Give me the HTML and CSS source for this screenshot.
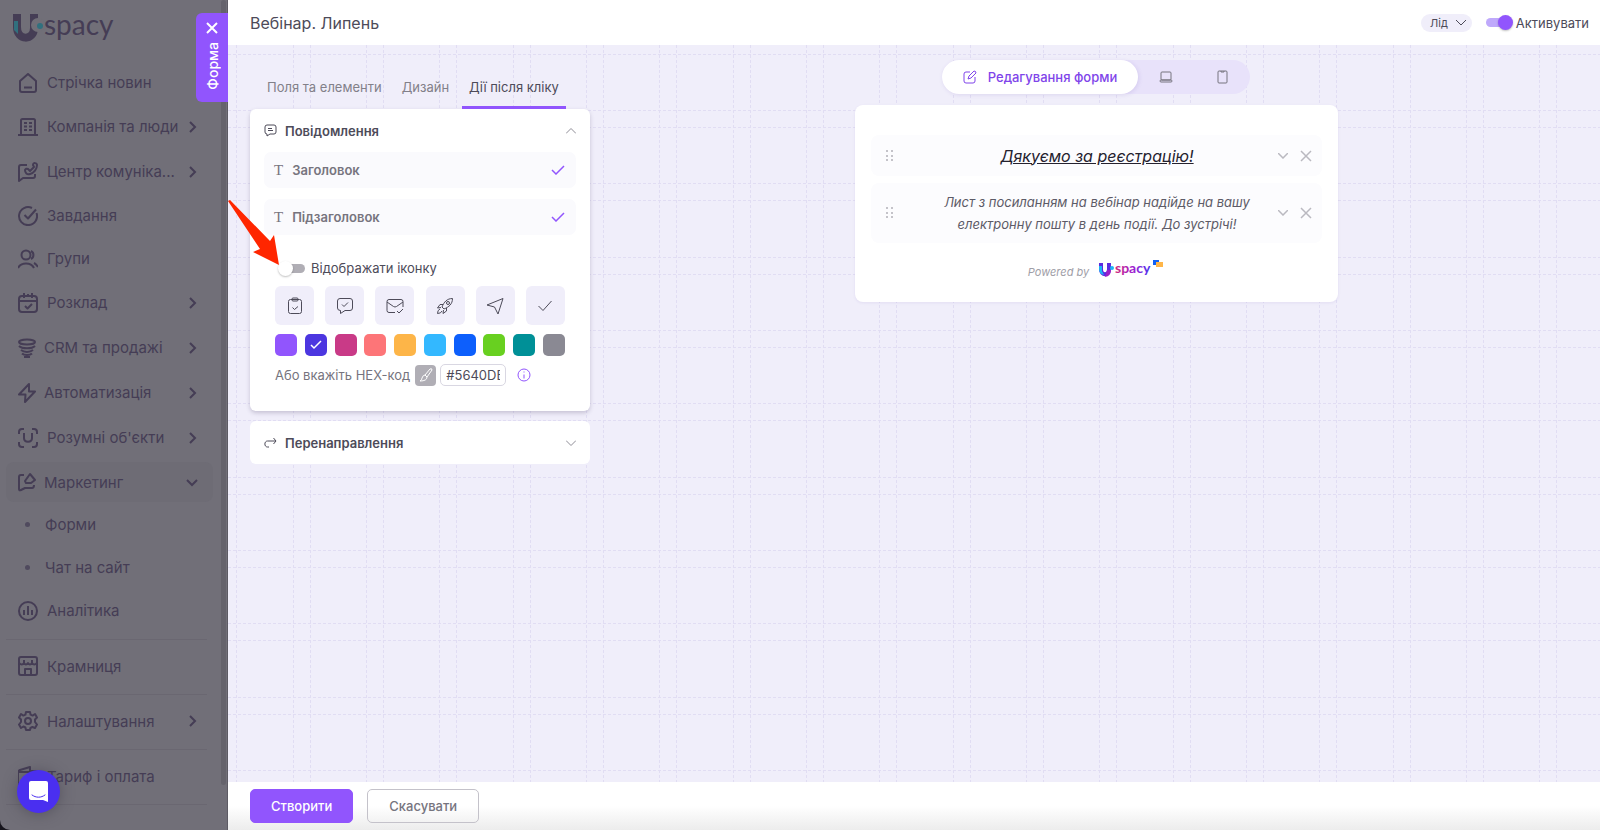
FILE: index.html
```
<!DOCTYPE html>
<html lang="uk">
<head>
  <meta charset="UTF-8" />
  <meta name="viewport" content="width=device-width, initial-scale=1.0"/>
  <title>Uspacy - Форма</title>
  <link rel="stylesheet" href="styles.css">
</head>
<body>

  <!-- SIDEBAR -->
  <aside class="sidebar">
    <svg class="sidebar-logo" width="120" height="44" viewBox="0 -10 120 44" role="img" aria-label="Uspacy">
      <path d="M5 2v13c0 14 17 14 17 1V2" fill="none" stroke="#453d55" stroke-width="8"/>
      <path d="M2 9h4v13l-4-4z" fill="#31707e"/>
      <circle cx="26" cy="13" r="7" fill="#716f78"/>
      <circle cx="28" cy="14" r="3" fill="#31707e"/>
      <text x="32" y="23" class="logo-text">spacy</text>
    </svg>

    <nav class="menu">
      <a href="#" class="menu-item">
        <svg class="icon" viewBox="0 0 20 20"><path d="M2 8l8-7 8 7v9a2 2 0 0 1-2 2H4a2 2 0 0 1-2-2zM6 14.500h8"/></svg>
        <span>Стрічка новин</span>
      </a>
      <a href="#" class="menu-item tall">
        <svg class="icon" viewBox="0 0 20 20"><path d="M3 18V3.500Q3 2 4.500 2h11Q17 2 17 3.500V18M0 18h20M6 6h3M11 6h3M6 9.500h3M11 9.500h3M6 13h3M11 13h3"/></svg>
        <span>Компанія та люди</span>
        <svg class="arrow" viewBox="0 0 12 12"><path d="M4 1l5 5-5 5"/></svg>
      </a>
      <a href="#" class="menu-item tall">
        <svg class="icon" viewBox="0 0 20 20"><path d="M9 3H3Q1 3 1 5v14l4-3h10q2 0 2-2v-2M7 8c0 3 2 5 5 4 4-1 7-5 7-9 0-2-4-3-4 0l1 2-4 4-2-2q-2-1-3 1z"/></svg>
        <span>Центр комуніка...</span>
        <svg class="arrow" viewBox="0 0 12 12"><path d="M4 1l5 5-5 5"/></svg>
      </a>
      <a href="#" class="menu-item">
        <svg class="icon" viewBox="0 0 20 20"><path d="M14 2a9 9 0 1 0 4.500 5M6.500 9l3.500 3.500L18 3.500"/></svg>
        <span>Завдання</span>
      </a>
      <a href="#" class="menu-item">
        <svg class="icon" viewBox="0 0 20 20"><circle cx="8" cy="6" r="4.500"/><path d="M0 19c3-6 13-6 16 0M13 2a4.500 4.500 0 0 1 0 8M16 14q2 1 4 4"/></svg>
        <span>Групи</span>
      </a>
      <a href="#" class="menu-item tall">
        <svg class="icon" viewBox="0 0 20 20"><rect x="1" y="3" width="18" height="16" rx="3"/><path d="M1 8h18M6 0v5M10 1v3M14 0v5M7 13l2.500 2.500L14 11"/></svg>
        <span>Розклад</span>
        <svg class="arrow" viewBox="0 0 12 12"><path d="M4 1l5 5-5 5"/></svg>
      </a>
      <a href="#" class="menu-item tall near">
        <svg class="icon" viewBox="0 0 20 20"><ellipse cx="9" cy="4" rx="8" ry="2.500"/><path d="M1 8c3 3 13 3 16 0M3 12c3 2.500 9 2.500 12 0M4 15.500c2 2 8 2 10 0M6 19h6"/></svg>
        <span>CRM та продажі</span>
        <svg class="arrow" viewBox="0 0 12 12"><path d="M4 1l5 5-5 5"/></svg>
      </a>
      <a href="#" class="menu-item tall near">
        <svg class="icon" viewBox="0 0 20 20"><path d="M11 1L1 11.500h6.500L7 19 17 8.500h-6z"/></svg>
        <span>Автоматизація</span>
        <svg class="arrow" viewBox="0 0 12 12"><path d="M4 1l5 5-5 5"/></svg>
      </a>
      <a href="#" class="menu-item tall">
        <svg class="icon" viewBox="0 0 20 20"><path d="M6 1H4Q1 1 1 4v2M14 1h2q3 0 3 3v2M1 14v2q0 3 3 3h2M19 14v2q0 3-3 3h-2M6 5v5c0 5 8 5 8 0V5"/></svg>
        <span>Розумні об'єкти</span>
        <svg class="arrow" viewBox="0 0 12 12"><path d="M4 1l5 5-5 5"/></svg>
      </a>
      <a href="#" class="menu-item tall near active">
        <svg class="icon" viewBox="0 0 20 20"><path d="M6 3H3Q1 3 1 5v12q0 2 2 1l4-2h7q2 0 2-3M7 9l5-7 5 6-4 3H8z"/></svg>
        <span>Маркетинг</span>
        <svg class="arrow" viewBox="0 0 12 12"><path d="M1 4l5 5 5-5"/></svg>
      </a>
      <a href="#" class="menu-item sub"><i class="dot"></i><span>Форми</span></a>
      <a href="#" class="menu-item sub"><i class="dot"></i><span>Чат на сайт</span></a>
      <a href="#" class="menu-item last">
        <svg class="icon" viewBox="0 0 20 20"><circle cx="10" cy="10" r="9"/><path d="M6 9v5M10 5v9M14 9v5"/></svg>
        <span>Аналітика</span>
      </a>
      <a href="#" class="menu-item ruled">
        <svg class="icon" viewBox="0 0 20 20"><rect x="1" y="1" width="18" height="18" rx="2"/><path d="M1 7q3 3 5 0 2 3 4 0 2 3 4 0 2 3 5 0M6 7V4M14 7V4M7 19v-6h6v6"/></svg>
        <span>Крамниця</span>
      </a>
      <a href="#" class="menu-item ruled">
        <svg class="icon" viewBox="0 0 20 20"><path d="M8 1h4l.600 2.700 2 .900L17 3l2 3.500-2 2v2.500l2 2.500-2 3.500-2.600-1-2 1L12 19H8l-.600-2.500-2-1L3 17l-2-3.500 2-2.500V8.500l-2-2L3 3l2.400 1.600 2-.900z"/><circle cx="10" cy="10" r="3"/></svg>
        <span>Налаштування</span>
        <svg class="arrow" viewBox="0 0 12 12"><path d="M4 1l5 5-5 5"/></svg>
      </a>
      <a href="#" class="menu-item ruled">
        <svg class="icon" viewBox="0 0 20 20"><path d="M0 7q0-2 2-3l10-3v4h5q2 0 2 2v10q0 2-2 2H2q-2 0-2-2zM1 6h11"/></svg>
        <span>Тариф і оплата</span>
      </a>
      <div class="menu-item ruled"></div>
    </nav>
    <div class="scrollbar"></div>
  </aside>

  <button class="form-tab" type="button" aria-label="Закрити форму">
    <svg width="12" height="12" viewBox="0 0 12 12"><path d="M1 1l10 10M11 1L1 11"/></svg>
    <span>Форма</span>
  </button>

  <button class="chat-btn" type="button" aria-label="Чат">
    <svg width="20" height="22" viewBox="0 0 20 22"><path d="M2 0h15q2 0 2 2v19l-5-2H2q-2 0-2-2V2q0-2 2-2z" fill="#fff"/><path d="M3 14c4 3 9 3 13 0" fill="none" stroke="#4a2ff0" stroke-linecap="round"/></svg>
  </button>

  <!-- FORM EDITOR -->
  <div class="page">
    <header class="topbar">
      <h1>Вебінар. Липень</h1>
      <button class="lead-btn" type="button">Лід
        <svg width="10" height="6" viewBox="0 0 10 6"><path d="M0 0l5 5 5-5"/></svg>
      </button>
      <label class="switch"><input type="checkbox" checked> Активувати</label>
    </header>

    <main class="editor">
      <svg class="grid-lines" aria-hidden="true">
        <defs>
          <pattern id="grid" width="220" height="220" patternUnits="userSpaceOnUse">
            <path d="M8.500 0v220M65.500 0v220M82.500 0v220M138.500 0v220M155.500 0v220M211.500 0v220M0 9.500h220M0 65.500h220M0 82.500h220M0 138.500h220M0 155.500h220M0 212.500h220"/>
          </pattern>
        </defs>
        <rect width="100%" height="100%" fill="url(#grid)"/>
      </svg>

      <section class="settings">
        <div class="tabs" role="tablist">
          <button type="button" role="tab">Поля та елементи</button>
          <button type="button" role="tab">Дизайн</button>
          <button type="button" role="tab" class="current">Дії після кліку</button>
        </div>

        <div class="panel open">
          <button class="panel-head" type="button">
            <svg width="13" height="13" viewBox="0 0 13 13"><path d="M3 1h7q2 0 2 2v5q0 2-2 2H6l-3 2v-2Q1 10 1 8V3q0-2 2-2zM4 4.500h4M4 6.500h5"/></svg>
            <span>Повідомлення</span>
            <svg class="chevron" width="10" height="6" viewBox="0 0 10 6"><path d="M0 5.500l5-5 5 5"/></svg>
          </button>

          <button class="option" type="button">
            <span class="letter">T</span><span>Заголовок</span>
            <svg width="14" height="10" viewBox="0 0 14 10"><path d="M1 5l4 4 8-8"/></svg>
          </button>
          <button class="option" type="button">
            <span class="letter">T</span><span>Підзаголовок</span>
            <svg width="14" height="10" viewBox="0 0 14 10"><path d="M1 5l4 4 8-8"/></svg>
          </button>

          <div class="icon-settings">
            <label class="switch"><input type="checkbox"> Відображати іконку</label>

            <div class="icon-row">
              <button type="button" aria-label="Завдання"><svg viewBox="0 0 18 18"><rect x="2.500" y="2.500" width="13" height="14" rx="2"/><rect x="6" y="1" width="6" height="3" rx="1"/><path d="M6.500 10.500l2 2 3.500-3"/></svg></button>
              <button type="button" aria-label="Повідомлення"><svg viewBox="0 0 18 18"><path d="M4 1.500h10q2.500 0 2.500 2.500v7q0 2.500-2.500 2.500H9L4.500 16.500v-3q-3 0-3-2.500V4Q1.500 1.500 4 1.500zM6 7.500l2 2 4-4"/></svg></button>
              <button type="button" aria-label="Лист"><svg viewBox="0 0 18 18"><path d="M9 15.500H3q-2 0-2-2v-9q0-2 2-2h12q2 0 2 2V10M1 5l6.500 4.500q1.500 1 3 0L17 5M11 14l2 2 4-4"/></svg></button>
              <button type="button" aria-label="Ракета"><svg viewBox="0 0 18 18"><path d="M6 10C8 5 11 1.500 16.500 1.500 16.500 7 13 10 8 12zM7 7.500H4L1.500 11 5 10.500M10.500 11v3L7 16.500 7.500 13M4 12q-2.500 1-2.500 4.500Q5 16.500 6 14"/><circle cx="12" cy="6" r="1.500"/></svg></button>
              <button type="button" aria-label="Літачок"><svg viewBox="0 0 18 18"><path d="M1 8L17 1.500 12 17 8.500 10z"/></svg></button>
              <button type="button" aria-label="Галочка"><svg viewBox="0 0 18 18"><path d="M2.500 9l4.500 4.500L15.500 4"/></svg></button>
            </div>

            <div class="color-row">
              <button type="button" class="color violet" aria-label="Фіолетовий"></button>
              <button type="button" class="color indigo" aria-label="Індиго"><svg width="12" height="10" viewBox="0 0 12 10"><path d="M1 5l3 3 7-7"/></svg></button>
              <button type="button" class="color pink" aria-label="Рожевий"></button>
              <button type="button" class="color coral" aria-label="Кораловий"></button>
              <button type="button" class="color orange" aria-label="Помаранчевий"></button>
              <button type="button" class="color sky" aria-label="Блакитний"></button>
              <button type="button" class="color blue" aria-label="Синій"></button>
              <button type="button" class="color green" aria-label="Зелений"></button>
              <button type="button" class="color teal" aria-label="Бірюзовий"></button>
              <button type="button" class="color gray" aria-label="Сірий"></button>
            </div>

            <div class="hex-row">
              <label for="hexCode">Або вкажіть HEX-код</label>
              <button type="button" class="brush" aria-label="Обрати колір"><svg width="14" height="14" viewBox="0 0 14 14"><path d="M6 7l5-6q2-1 2 1L8 9zM6 7l2 2q0 4-7 4 2-1 2-3 1-3 3-3z"/></svg></button>
              <input type="text" id="hexCode" value="#5640DB">
              <svg class="info" width="14" height="14" viewBox="0 0 14 14"><circle cx="7" cy="7" r="6"/><path d="M7 6.500v4M7 3.500v1"/></svg>
            </div>
          </div>
        </div>

        <div class="panel">
          <button class="panel-head" type="button">
            <svg width="13" height="13" viewBox="0 0 13 13"><path d="M5 11H3.500C0 11 0 5 3.500 5H12M9.500 2L12 5 9.500 8"/></svg>
            <span>Перенаправлення</span>
            <svg class="chevron" width="10" height="6" viewBox="0 0 10 6"><path d="M0 .500l5 5 5-5"/></svg>
          </button>
        </div>
      </section>

      <section class="preview">
        <div class="modes">
          <button type="button" class="mode current">
            <svg width="14" height="14" viewBox="0 0 14 14"><path d="M7 2H3Q1 2 1 4v7q0 2 2 2h7q2 0 2-2V7M5 9l1-3 5-5q2 0 2 2L8 8z"/></svg>
            Редагування форми
          </button>
          <button type="button" class="mode" aria-label="Комп'ютер"><svg width="14" height="14" viewBox="0 0 14 14"><rect x="2" y="2" width="10" height="8" rx="1"/><rect x="1" y="10" width="12" height="2" rx="1"/></svg></button>
          <button type="button" class="mode" aria-label="Телефон"><svg width="14" height="14" viewBox="0 0 14 14"><rect x="3" y="1" width="9" height="12" rx="1"/><path d="M6 1v1h3V1"/></svg></button>
        </div>

        <div class="form-card">
          <div class="field">
            <svg class="drag" width="8" height="12" viewBox="0 0 8 12"><path d="M0 0h2v2H0zM5 0h2v2H5zM0 5h2v2H0zM5 5h2v2H5zM0 9h2v2H0zM5 9h2v2H5z"/></svg>
            <h2>Дякуємо за реєстрацію!</h2>
            <button type="button" aria-label="Розгорнути"><svg width="10" height="6" viewBox="0 0 10 6"><path d="M0 0l5 5 5-5"/></svg></button>
            <button type="button" aria-label="Видалити"><svg width="12" height="12" viewBox="0 0 12 12"><path d="M1 1l10 10M11 1L1 11"/></svg></button>
          </div>
          <div class="field">
            <svg class="drag" width="8" height="12" viewBox="0 0 8 12"><path d="M0 0h2v2H0zM5 0h2v2H5zM0 5h2v2H0zM5 5h2v2H5zM0 9h2v2H0zM5 9h2v2H5z"/></svg>
            <p>Лист з посиланням на вебінар надійде на вашу<br>електронну пошту в день події. До зустрічі!</p>
            <button type="button" aria-label="Розгорнути"><svg width="10" height="6" viewBox="0 0 10 6"><path d="M0 0l5 5 5-5"/></svg></button>
            <button type="button" aria-label="Видалити"><svg width="12" height="12" viewBox="0 0 12 12"><path d="M1 1l10 10M11 1L1 11"/></svg></button>
          </div>
          <div class="powered">
            <span>Powered by</span>
            <svg width="66" height="20" viewBox="0 0 66 20" role="img" aria-label="Uspacy">
              <defs>
                <linearGradient id="brand"><stop offset="0" stop-color="#d02a7a"/><stop offset=".5" stop-color="#a01fd0"/><stop offset="1" stop-color="#4a35f0"/></linearGradient>
              </defs>
              <path d="M3 4v6c0 7 8 7 8 0V4" fill="none" stroke="#5b2be0" stroke-width="4"/>
              <path d="M1 7h3v5l2 4q-5-1-5-6z" fill="#1cb5f5"/>
              <path d="M9 11h4q0 6-6 7z" fill="#9a1fc8"/>
              <circle cx="14" cy="9" r="2" fill="#1cb5f5"/>
              <text x="17" y="14" class="brand-text" fill="url(#brand)">spacy</text>
              <path d="M55 1h6v5h-6z" fill="#1060f5"/>
              <path d="M58 3h7v5h-7z" fill="#ffb648"/>
            </svg>
          </div>
        </div>
      </section>
    </main>

    <footer class="actions">
      <button type="button" class="btn primary">Створити</button>
      <button type="button" class="btn">Скасувати</button>
    </footer>
  </div>

  <!-- POINTER TO THE ICON SWITCH -->
  <svg class="pointer" width="52" height="66" viewBox="0 0 52 66" aria-hidden="true"><path d="M0 1l2-1 40 41 4-6 5 30-26-13 7-3z"/></svg>

</body>
</html>
```
FILE: styles.css
```
* {
  box-sizing: border-box;
}

body {
  margin: 0;
  min-height: 100vh;
  display: flex;
  background-color: #17151d;
  font-family: Inter, sans-serif;
  font-size: 13px;
  color: #4d4b59;
}

button {
  font: inherit;
  color: inherit;
  border: none;
  background: none;
  padding: 0;
  cursor: pointer;
}

svg {
  flex: none;
  fill: none;
  stroke: currentColor;
}

/* SIDEBAR */
.sidebar {
  position: relative;
  width: 228px;
  height: 100vh;
  flex: none;
  overflow: hidden;
  background-color: #716f78;
  border-right: 1px solid #5d5b64;
  border-bottom-left-radius: 10px;
  color: #453d55;
}

.sidebar-logo {
  display: block;
  margin: 2px 0 15px 12px;
  stroke: none;
}

.logo-text {
  font-family: Lato, sans-serif;
  font-size: 28px;
  fill: #453d55;
}

.menu {
  padding: 0 14px 0 6px;
}

.menu-item {
  display: flex;
  align-items: center;
  height: 43px;
  padding: 0 15px 0 12px;
  border-radius: 8px;
  font-size: 15px;
  color: inherit;
  text-decoration: none;
  white-space: nowrap;
}

.menu-item.tall {
  height: 45px;
}

.menu-item.active {
  height: 40px;
  margin: 2px 0 1px;
  background-color: #6e6c75;
}

.menu-item.last {
  margin-bottom: 7px;
}

.menu-item.ruled {
  height: 55px;
  margin-right: 6px;
  padding-right: 9px;
  padding-bottom: 2px;
  border-top: 1px solid #6a6771;
  border-radius: 0;
}

.menu-item .icon {
  width: 20px;
  height: 20px;
  margin-right: 9px;
  stroke-width: 2;
  stroke-linejoin: round;
}

.menu-item.near .icon {
  margin-right: 6px;
}

.menu-item .arrow {
  width: 12px;
  height: 12px;
  margin-left: auto;
  stroke-width: 2;
}

.menu-item.sub {
  gap: 15px;
  padding-left: 19px;
}

.dot {
  width: 5px;
  height: 5px;
  border-radius: 50%;
  background-color: #504a5e;
}

.scrollbar {
  position: absolute;
  top: 0;
  right: 1px;
  width: 5px;
  height: 785px;
  border-radius: 4px;
  background-color: #65636c;
}

.form-tab {
  position: absolute;
  top: 13px;
  left: 196px;
  width: 32px;
  height: 89px;
  display: flex;
  flex-direction: column;
  align-items: center;
  gap: 8px;
  padding-top: 9px;
  border-radius: 6px 0 0 6px;
  background-color: #9155fd;
  color: white;
  font-size: 14px;
  font-weight: 500;
}

.form-tab svg {
  stroke-width: 2;
}

.form-tab span {
  writing-mode: vertical-rl;
  transform: rotate(180deg);
}

.chat-btn {
  position: fixed;
  bottom: 17px;
  left: 17px;
  width: 43px;
  height: 43px;
  display: flex;
  align-items: center;
  justify-content: center;
  border-radius: 50%;
  background-color: #4a2ff0;
  box-shadow: 0 1px 14px rgba(60,55,70,0.5);
}

.chat-btn svg {
  stroke: none;
}

/* FORM EDITOR */
.page {
  flex: 1;
  display: flex;
  flex-direction: column;
  min-width: 0;
  height: 100vh;
}

.topbar {
  display: flex;
  align-items: center;
  height: 45px;
  flex: none;
  padding: 0 11px 0 22px;
  background-color: white;
}

.topbar h1 {
  margin: 0 auto 0 0;
  font-size: 16px;
  font-weight: 400;
}

.lead-btn {
  display: flex;
  align-items: center;
  gap: 8px;
  height: 18px;
  margin-right: 14px;
  padding: 0 6px 0 9px;
  border-radius: 9px;
  background-color: #f0eefa;
  font-size: 11px;
}

.switch {
  display: flex;
  align-items: center;
  gap: 4px;
}

.switch input {
  appearance: none;
  position: relative;
  width: 26px;
  height: 9px;
  margin: 0;
  border-radius: 5px;
  background-color: #b0aeb5;
}

.switch input::before {
  content: "";
  position: absolute;
  top: -3px;
  left: -1px;
  width: 15px;
  height: 15px;
  border-radius: 50%;
  background-color: white;
  box-shadow: 0 1px 2px rgba(0,0,0,0.25);
}

.switch input:checked {
  background-color: #bfa9fb;
}

.switch input:checked::before {
  left: 12px;
  background-color: #9155fd;
}

.editor {
  position: relative;
  flex: 1;
  display: flex;
  min-height: 0;
  background-color: #f0eefa;
}

.grid-lines {
  position: absolute;
  top: 0;
  left: 0;
  width: 100%;
  height: 100%;
  stroke: none;
}

.grid-lines path {
  stroke: #e1ddf3;
  stroke-dasharray: 3 2;
}

.settings {
  position: relative;
  width: 340px;
  margin-left: 22px;
  flex: none;
}

.tabs {
  display: flex;
  gap: 6px;
  height: 64px;
  padding-left: 10px;
  padding-top: 22px;
}

.tabs button {
  padding: 0 7px;
  border-bottom: 3px solid transparent;
  color: #828089;
}

.tabs .current {
  border-color: #9155fd;
  border-radius: 3px 3px 0 0;
  color: #4d4b59;
}

.panel {
  margin-bottom: 10px;
  padding: 0 14px;
  border-radius: 6px;
  background-color: white;
}

.panel.open {
  padding-bottom: 25px;
  box-shadow: 0 2px 4px rgba(70,60,100,0.25);
}

.panel-head {
  display: flex;
  align-items: center;
  gap: 8px;
  width: 100%;
  height: 43px;
  font-weight: 600;
}

.chevron {
  margin-left: auto;
  color: #8e8c96;
}

.option {
  display: flex;
  align-items: center;
  width: 100%;
  height: 36px;
  margin-bottom: 11px;
  padding: 0 11px 0 10px;
  gap: 9px;
  border-radius: 7px;
  background-color: #fafafd;
  font-weight: 600;
  color: #76747e;
}

.option .letter {
  font-family: "Liberation Serif", serif;
  font-size: 15px;
  font-weight: 400;
}

.option svg {
  margin-left: auto;
  color: #9155fd;
  stroke-width: 1.500;
}

.icon-settings {
  padding: 12px 11px 0;
}

.icon-settings .switch {
  height: 20px;
  padding-left: 4px;
  gap: 6px;
}

.icon-row {
  display: flex;
  justify-content: space-between;
  margin-top: 8px;
}

.icon-row button {
  display: flex;
  align-items: center;
  justify-content: center;
  width: 39px;
  height: 39px;
  border-radius: 6px;
  background-color: #f0eefa;
}

.icon-row svg {
  width: 18px;
  height: 18px;
}

.color-row {
  display: flex;
  justify-content: space-between;
  margin-top: 9px;
}

.color {
  display: flex;
  align-items: center;
  justify-content: center;
  width: 22px;
  height: 22px;
  border-radius: 5px;
  color: white;
}

.color svg {
  stroke-width: 1.500;
}

.violet { background-color: #9155fd; }
.indigo { background-color: #4c36e0; }
.pink { background-color: #c93a87; }
.coral { background-color: #fd7578; }
.orange { background-color: #fdb548; }
.sky { background-color: #33b8ff; }
.blue { background-color: #0d5ffc; }
.green { background-color: #68d020; }
.teal { background-color: #009097; }
.gray { background-color: #8a8993; }

.hex-row {
  display: flex;
  align-items: center;
  margin-top: 8px;
  color: #76747e;
}

.brush {
  display: flex;
  align-items: center;
  justify-content: center;
  width: 21px;
  height: 21px;
  margin: 0 4px 0 5px;
  border-radius: 4px;
  background-color: #b0aeb5;
  color: white;
}

.hex-row input {
  width: 66px;
  height: 22px;
  padding: 0 5px;
  border: 1px solid #d9d7e2;
  border-radius: 5px;
  font: inherit;
  color: #4d4b59;
}

.info {
  margin-left: 11px;
  color: #9155fd;
}

/* PREVIEW */
.preview {
  position: relative;
  flex: 1;
  display: flex;
  flex-direction: column;
  align-items: center;
  padding: 15px 20px 0 22px;
}

.modes {
  display: flex;
  height: 34px;
  border-radius: 17px;
  background-color: #e8e2fa;
}

.mode {
  display: flex;
  align-items: center;
  gap: 11px;
  padding: 0 21px;
  color: #76747e;
}

.mode.current {
  border-radius: 17px;
  background-color: white;
  box-shadow: 1px 1px 4px rgba(110,80,180,0.15);
  font-weight: 500;
  color: #8045ea;
}

.form-card {
  width: 483px;
  margin-top: 11px;
  padding: 30px 16px 15px;
  border-radius: 8px;
  background-color: white;
  box-shadow: 0 1px 3px rgba(110,80,180,0.1);
}

.field {
  display: flex;
  align-items: center;
  min-height: 41px;
  margin-bottom: 7px;
  padding: 8px 10px 8px 15px;
  border-radius: 8px;
  background-color: #fcfcfe;
  font-style: italic;
  text-align: center;
}

.field h2,
.field p {
  flex: 1;
  margin: 0;
  padding-left: 35px;
}

.field h2 {
  font-size: 16px;
  font-weight: 400;
  text-decoration: underline;
  color: #25222f;
}

.field p {
  line-height: 22px;
  color: #5d5b67;
}

.field button {
  display: flex;
  margin-left: 12px;
  color: #bab9c0;
}

.field button svg {
  stroke-width: 1.500;
}

.drag {
  fill: #c4c3c9;
  stroke: none;
}

.powered {
  display: flex;
  align-items: center;
  justify-content: center;
  gap: 9px;
  height: 37px;
  font-size: 11px;
  font-style: italic;
  color: #a09ea7;
}

.powered span {
  padding-top: 6px;
}

.powered svg {
  stroke: none;
}

.brand-text {
  font-family: Lato, sans-serif;
  font-size: 14px;
  font-style: normal;
  font-weight: 700;
}

/* FOOTER */
.actions {
  position: relative;
  display: flex;
  align-items: center;
  gap: 14px;
  height: 48px;
  flex: none;
  padding-left: 22px;
  background: linear-gradient(white 50%, #ececec);
}

.btn {
  height: 34px;
  padding: 0 21px;
  border: 1px solid #c4c2ca;
  border-radius: 5px;
  font-weight: 500;
  color: #76747e;
}

.btn.primary {
  padding: 0 20px;
  border-color: #9155fd;
  background-color: #9155fd;
  color: white;
}

.pointer {
  position: absolute;
  top: 200px;
  left: 228px;
  fill: #ff2600;
  stroke: none;
}
```
